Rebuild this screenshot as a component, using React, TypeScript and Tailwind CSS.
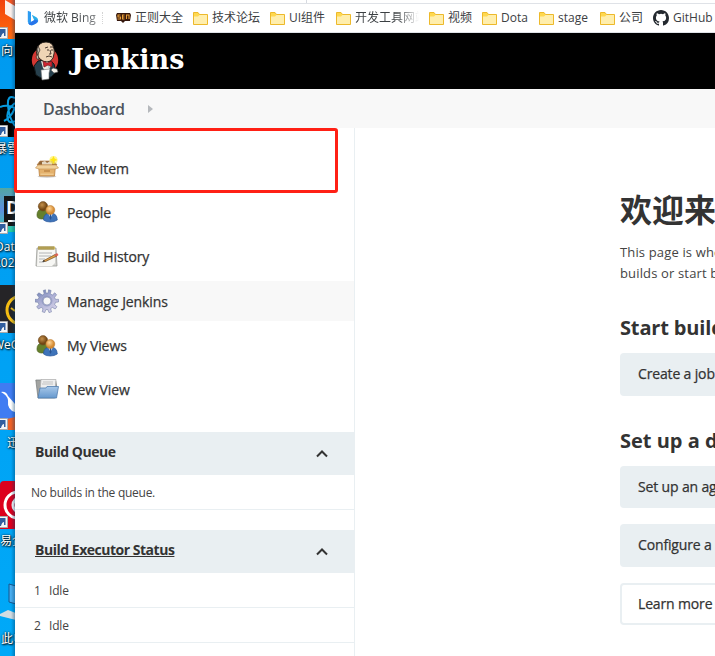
import type { ReactNode } from "react";

const SANS = "font-['Open_Sans','Noto_Sans_CJK_SC',sans-serif]";

function Folder() {
  return (
    <svg width="15" height="13" viewBox="0 0 15 13" className="shrink-0">
      <path d="M.5 12.5V.5H5L6.500 2.500H14.500V12.500Z" fill="#ffd84f" stroke="#edb92b" />
      <path d="M1 4.500H5L6.500 3H14V12H1Z" fill="#ffeeac" />
    </svg>
  );
}

function Bing() {
  return (
    <svg width="12" height="16" viewBox="0 0 12 16" className="shrink-0">
      <path d="M.8.8 4 2v10.2L1.8 13.800.8 12Z" fill="#2c9cf2" />
      <path d="M4.800 4.800 9.400 7.200Q11.300 8.400 11.200 11 10.500 13.500 5.200 15.200 2.600 15.800 1.300 13.600L7.200 10.200Z" fill="#2aaee9" />
      <path d="m1.300 13.500 7-4 2.800 1.300Q10.500 13.400 5.200 15.200 2.600 15.800 1.300 13.500Z" fill="#2874ea" />
    </svg>
  );
}

function Badge() {
  return (
    <svg width="15" height="12" viewBox="0 0 15 12" className="shrink-0">
      <path d="M1 1h13l1 2-1 6H9l-2 2-2-2H1L0 3Z" fill="#35170d" />
      <path d="M4.500 3H2v2h2.500v2H1.500M8.500 3H6.500v4H8.500M6.500 5h2M10.500 7V3H13v4" fill="none" stroke="#e9a13a" strokeWidth="1.100" />
    </svg>
  );
}

function Octocat() {
  return (
    <svg width="16" height="16" viewBox="0 0 16 16" className="shrink-0" fill="#24292f">
      <path d="M8 0C3.58 0 0 3.58 0 8c0 3.54 2.29 6.53 5.47 7.59.4.07.55-.17.55-.38 0-.19-.01-.82-.01-1.49-2.01.37-2.53-.49-2.69-.94-.09-.23-.48-.94-.82-1.13-.28-.15-.68-.52-.01-.53.63-.01 1.08.58 1.23.82.72 1.21 1.87.87 2.33.66.07-.52.28-.87.51-1.07-1.78-.2-3.64-.89-3.64-3.95 0-.87.31-1.59.82-2.15-.08-.2-.36-1.02.08-2.12 0 0 .67-.21 2.2.82a7.6 7.6 0 0 1 4 0c1.53-1.04 2.2-.82 2.2-.82.44 1.1.16 1.92.08 2.12.51.56.82 1.27.82 2.15 0 3.07-1.87 3.75-3.65 3.95.29.25.54.73.54 1.48 0 1.07-.01 1.93-.01 2.2 0 .21.15.46.55.38A8.01 8.01 0 0 0 16 8c0-4.42-3.58-8-8-8Z" />
    </svg>
  );
}

function Butler() {
  return (
    <svg width="28" height="40" viewBox="0 0 28 40" className="shrink-0">
      <circle cx="14" cy="19" r="13.2" fill="#d33833" />
      <path d="M7 20 3 25l2 9 5 3 10-1 5-5-2-8-5-5Z" fill="#27404d" stroke="#101719" />
      <path d="M9 18q-5-5-3-10Q8 1 15 1t8 7q1 3-1 9-2 4-6 4-4 0-7-3Z" fill="#eed4b5" stroke="#1c1713" strokeWidth=".9" />
      <path d="M6 8q1 4 1 6-3 0-1 4l2 1-1-6 2-4-2-4Z" fill="#c1b8a8" stroke="#302721" strokeWidth=".7" />
      <path d="m14 7 3-1m2 0 3 0M16 9l2 0m2 0 2 0m-3 0 1 4-2 0m-3 3q3-2 6 0" fill="none" stroke="#33271f" strokeWidth=".9" />
      <path d="m10 20 4 1 5 0 1 4-4 7-4-5Z" fill="#ece9df" />
      <path d="m12 20 4 2 5-2v6l-4-2-4 2Z" fill="#d22532" stroke="#65161b" strokeWidth=".7" />
      <circle cx="18" cy="26" r="1" fill="#a8c0cb" />
      <path d="m10 29 9-1-1 4v6l-7 1Z" fill="#fff" stroke="#777" strokeWidth=".6" />
      <path d="m20 29 2-2 4 1 1 3-4 1Z" fill="#f5f0e7" stroke="#555" strokeWidth=".6" />
    </svg>
  );
}

function Box() {
  return (
    <svg width="24" height="24" viewBox="0 0 24 24" className="shrink-0">
      <ellipse cx="12" cy="20.500" rx="9.500" ry="1.200" fill="#ccc" />
      <path d="M5 5h14l3 4H2Z" fill="#8f6538" stroke="#b9824a" strokeWidth=".7" />
      <path d="m7 6 3-1 2 2 3-2 2 2v2H7Z" fill="#e5d8c2" />
      <path d="M3.500 9h17l-1 11H4.500Z" fill="#e4b16c" stroke="#bb8240" strokeWidth=".8" />
      <path d="M3 9h18l2.500 3-3.500 1H4L.5 12Z" fill="#f0d09b" stroke="#c38f50" strokeWidth=".6" />
      <path d="M9 14h6v2H9Z" fill="#c9924f" />
      <path d="M5.500 17.500h13v1.500h-13Z" fill="#efc98e" />
      <circle cx="18.500" cy="4" r="4" fill="#fff06b" opacity=".75" />
      <path d="m18.500 0 1.100 2.600L22.500 4l-2.800 1.100-1.200 2.600-1.100-2.600L14.500 4l2.800-1.400Z" fill="#ffe511" />
    </svg>
  );
}

function People() {
  return (
    <svg width="24" height="24" viewBox="0 0 24 24" className="shrink-0">
      <defs>
        <radialGradient id="hd1" cx=".4" cy=".35"><stop stopColor="#c5914c" /><stop offset="1" stopColor="#744714" /></radialGradient>
        <radialGradient id="hd2" cx=".4" cy=".35"><stop stopColor="#ffd79a" /><stop offset="1" stopColor="#d58b32" /></radialGradient>
      </defs>
      <path d="M2 15q0-6 6-6 6 0 6 6-2 4-7 4-5 0-5-4Z" fill="#65802c" stroke="#495e1a" strokeWidth=".7" />
      <circle cx="8" cy="6.300" r="4.700" fill="url(#hd1)" stroke="#68451c" strokeWidth=".5" />
      <path d="M8.500 20q0-7 7-7 6.500 0 6.800 7-3 2-7 2-4.500 0-6.800-2Z" fill="#3e73b9" stroke="#27569b" strokeWidth=".7" />
      <path d="m13 13 2.500 5 2.500-5Z" fill="#eef4fc" />
      <path d="m15 14 1 0 .5 4-1 2-1-2Z" fill="#285391" />
      <circle cx="15.300" cy="10" r="4.500" fill="url(#hd2)" stroke="#b87526" strokeWidth=".5" />
    </svg>
  );
}

function Notepad() {
  return (
    <svg width="24" height="24" viewBox="0 0 24 24" className="shrink-0">
      <path d="M2 3h19l1 18H1Z" fill="#d2d2cf" stroke="#9b9c97" strokeWidth=".8" />
      <path d="M3 4h17v14l-3 3H2Z" fill="#f7f7f4" />
      <path d="M3 1.500h17v3H3Z" fill="#d2bd67" />
      <path d="M4 1v4m2-4v4m2-4v4m2-4v4m2-4v4m2-4v4m2-4v4m2-4v4" stroke="#807235" strokeWidth=".8" />
      <path d="M4 8h13M4 11h12M4 14h6M4 17h5" stroke="#b2b4b6" strokeWidth="1" />
      <path d="m8 16 12-6.500 2 1.500-11.500 5.500Z" fill="#e5a345" stroke="#6e4b21" strokeWidth=".7" />
      <path d="m19 10 3-2 1.500 2-2 1.500Z" fill="#d96255" /><path d="m7 17 2-2 1 1.500Z" fill="#333" />
    </svg>
  );
}

function Gear() {
  return (
    <svg width="24" height="24" viewBox="0 0 24 24" className="shrink-0">
      <defs><linearGradient id="cog" x2=".6" y2="1"><stop stopColor="#6479ad" /><stop offset=".45" stopColor="#a6aad1" /><stop offset="1" stopColor="#d3d0e8" /></linearGradient></defs>
      <path fillRule="evenodd" d="m10.500.8.3 3.200h2.400l.3-3.200 2.600.7-.8 3.200 2 1.300 2.500-2.200 1.800 2-2 2.500.9 2.100 3-.1v2.700l-3 .3-.8 2.200 2.200 2.300-1.700 2.200-2.800-1.600-1.800 1.300.9 3.100-2.500.8-1.100-3h-2l-1.200 3-2.500-.9.8-3-1.800-1.300-2.700 1.600-1.800-2.200 2.200-2.300-.8-2.200-3-.3v-2.700l3 .1.900-2.100-2-2.500 1.800-2L7.300 6l1.900-1.300-.9-3.200ZM12 8a4 4 0 1 0 0 8 4 4 0 0 0 0-8Z" fill="url(#cog)" stroke="#737fa7" strokeWidth=".6" />
      <circle cx="12" cy="12" r="4.900" fill="none" stroke="#8791ba" strokeWidth=".7" />
    </svg>
  );
}

function BlueFolder() {
  return (
    <svg width="24" height="24" viewBox="0 0 24 24" className="shrink-0">
      <defs><linearGradient id="tab" x2="0" y2="1"><stop stopColor="#a8c8e9" /><stop offset="1" stopColor="#6598ce" /></linearGradient></defs>
      <path d="M.8 2h6l1 1h13l1 6-2 11H3Z" fill="#a2a3a1" stroke="#777b7b" strokeWidth=".7" />
      <path d="M6 1.500h15l-1 11H5Z" fill="#eee" stroke="#aaa" strokeWidth=".7" />
      <path d="m8 4 10 0m-11 2h11" stroke="#c2c2c2" />
      <path d="M5 10h6l1-1.500h11.500L21.500 20H3Z" fill="url(#tab)" stroke="#527eaf" strokeWidth=".8" />
    </svg>
  );
}

const bookmarks: { icon: ReactNode; label: string; width: string; fade?: boolean }[] = [
  { icon: <Folder />, label: "技术论坛", width: "w-12" },
  { icon: <Folder />, label: "UI组件", width: "w-[37px]" },
  { icon: <Folder />, label: "开发工具网站", width: "w-16", fade: true },
  { icon: <Folder />, label: "视频", width: "w-6" },
  { icon: <Folder />, label: "Dota", width: "w-7" },
  { icon: <Folder />, label: "stage", width: "w-8" },
  { icon: <Folder />, label: "公司", width: "w-6" },
  { icon: <Octocat />, label: "GitHub", width: "w-[42px]" },
];

function Bookmarks() {
  return (
    <div className="flex h-[30px] shrink-0 items-center overflow-hidden border-t border-b border-[#dfe2e7] pl-3 text-xs text-[#3c4043]">
      <Bing />
      <span className="ml-[5px] w-[58px] overflow-hidden whitespace-nowrap bg-gradient-to-r from-[#3c4043] from-60% to-[#3c404380] bg-clip-text text-transparent">微软 Bing</span>
      <span className="mr-[13px] h-3 border-l border-dotted border-[#d4d4d4]" />
      <Badge />
      <span className="ml-1 w-12 shrink-0 whitespace-nowrap">正则大全</span>
      {bookmarks.map((b) => (
        <div key={b.label} className="ml-2.5 flex shrink-0 items-center gap-1">
          {b.icon}
          <span className={`${b.width} whitespace-nowrap ${b.fade ? "overflow-hidden bg-gradient-to-r from-[#3c4043] from-65% to-transparent bg-clip-text text-transparent" : ""}`}>{b.label}</span>
        </div>
      ))}
    </div>
  );
}

const tasks = [
  { icon: <Box />, label: "New Item" },
  { icon: <People />, label: "People" },
  { icon: <Notepad />, label: "Build History" },
  { icon: <Gear />, label: "Manage Jenkins", active: true },
  { icon: <People />, label: "My Views" },
  { icon: <BlueFolder />, label: "New View" },
];

function PaneHeader({ title, link }: { title: string; link?: boolean }) {
  return (
    <div className="flex h-[43px] items-center justify-between bg-[#e9eff2] pr-[26px] pl-5">
      <span className={`pb-0.5 text-sm font-bold tracking-[-0.48px] text-[#333] ${link ? "underline" : ""}`}>{title}</span>
      <svg width="13" height="9" viewBox="0 0 13 9"><path d="m2 7.500 5-5 5 5" fill="none" stroke="#333" strokeWidth="2" /></svg>
    </div>
  );
}

function SidePanel() {
  return (
    <aside className="relative w-[340px] shrink-0 border-r border-[#e9eff2] pt-5">
      <nav className="flex flex-col gap-[4.400px]">
        {tasks.map((t) => (
          <div key={t.label} className={`flex h-10 items-center gap-2 pl-5 text-sm text-[#333] ${t.active ? "bg-[#f8f8f8]" : ""}`}>
            {t.icon}
            <span className="pt-px tracking-[-0.1px] [-webkit-text-stroke:0.25px_#333]">{t.label}</span>
          </div>
        ))}
      </nav>
      <div className="mt-[22px]">
        <PaneHeader title="Build Queue" />
        <div className="flex h-[35px] items-center border-b border-[#e9eff2] pt-0.5 pl-4 text-xs tracking-[-0.26px] text-[#444]">No builds in the queue.</div>
      </div>
      <div className="mt-5">
        <PaneHeader title="Build Executor Status" link />
        {["1", "2"].map((n) => (
          <div key={n} className="flex h-[35px] items-center gap-2 border-b border-[#e9eff2] pt-0.5 pl-[19px] text-xs text-[#444]">
            <span>{n}</span><span className="tracking-[-0.1px]">Idle</span>
          </div>
        ))}
      </div>
      <div className="absolute top-0 -left-px h-[65px] w-[324px] rounded-[3px] border-3 border-[#ff2015]" />
    </aside>
  );
}

function Tile({ label, outline, className }: { label: string; outline?: boolean; className: string }) {
  return (
    <div className={`flex w-[560px] items-center whitespace-nowrap rounded pb-px text-sm tracking-[-0.15px] text-[#333] [-webkit-text-stroke:0.25px_#333] ${outline ? "border-2 border-[#e9eff2] pl-4" : "bg-[#e9eff2] pl-[18px]"} ${className}`}>{label}</div>
  );
}

function Main() {
  return (
    <main className="min-w-0 flex-1 overflow-hidden pt-[59px] pl-[265px] text-[#333]">
      <h1 className="h-[46px] whitespace-nowrap text-[32px] leading-[46px] font-bold">欢迎来到 Jenkins！</h1>
      <p className="mt-[9px] h-[42px] whitespace-nowrap text-[13px] leading-[21px] tracking-[0.15px] text-[#444]">This page is where your Jenkins jobs<br />builds or start building a software project.</p>
      <h2 className="mt-[30px] h-7 whitespace-nowrap text-xl leading-7 font-bold tracking-[-0.15px]">Start building your software project</h2>
      <Tile label="Create a job" className="mt-[11px] h-[43px]" />
      <h2 className="mt-[31px] h-7 whitespace-nowrap text-xl leading-7 font-bold">Set up a distributed build</h2>
      <Tile label="Set up an agent" className="mt-[11px] h-[42px]" />
      <Tile label="Configure a cloud" className="mt-4 h-[43px]" />
      <Tile label="Learn more about distributed builds" outline className="mt-4 h-[42px]" />
    </main>
  );
}

function Shortcut({ className }: { className: string }) {
  return (
    <svg width="8" height="12" viewBox="0 0 8 12" className={`absolute left-0 ${className}`}>
      <path d="M-1 .5H7.500V11.500H-1Z" fill="#f4f5f7" stroke="#aaa" />
      <path d="M0 2h5.500v7H4V6Q2 6 1 10H0Z" fill="#315e9f" />
    </svg>
  );
}

function DeskLabel({ className, children }: { className: string; children: ReactNode }) {
  return <span className={`absolute whitespace-nowrap text-xs leading-4 text-white [text-shadow:1px_1px_2px_#000,0_0_2px_#000] ${className}`}>{children}</span>;
}

function Desktop() {
  return (
    <div className="relative w-[15px] shrink-0 overflow-hidden bg-gradient-to-b from-[#0099ef] to-[#00a9f8]">
      <div className="absolute top-0 left-0 h-[39px] w-4 bg-gradient-to-b from-[#f13f0b] to-[#ff6b10]" />
      <svg width="10" height="20" viewBox="0 0 10 20" className="absolute top-0 left-[5px]"><path d="M0 0h10v20L0 14Z" fill="#fbefea" /><path d="m0 0 10 6v-6Z" fill="#f25422" /></svg>
      <Shortcut className="top-[27px]" />
      <DeskLabel className="top-[43px] left-px">向日葵</DeskLabel>
      <div className="absolute top-[89px] left-0 h-12 w-4 bg-black" />
      <svg width="15" height="40" viewBox="0 0 15 40" className="absolute top-[94px] left-0"><path d="M15 4Q7 0 8 12t7 20M0 13q7-3 15 1M15 9Q5 17 8 26q2 4 7 1M4 27q8-4 11-14" fill="none" stroke="#079bdf" strokeWidth="2" /></svg>
      <Shortcut className="top-[125px]" />
      <DeskLabel className="top-[141px] left-[-5px]">暴雪战网</DeskLabel>
      <div className="absolute top-[188px] left-0 h-[44px] w-4 bg-gradient-to-b from-[#52a7a3] via-[#5e8fde] to-[#18cf9d]" />
      <div className="absolute top-[196px] left-1 h-[30px] w-4 bg-[#151515]" />
      <span className="absolute top-[195px] left-1.5 text-lg leading-6 font-bold text-white">D</span>
      <div className="absolute top-[220px] left-2 h-0.5 w-3 bg-white" />
      <Shortcut className="top-[222px]" />
      <DeskLabel className="top-[239px] left-[-5px]">DataGrip</DeskLabel>
      <DeskLabel className="top-[255px] left-[-6px]">2020.1</DeskLabel>
      <div className="absolute top-[285px] left-0 h-12 w-4 bg-[#252427]" />
      <svg width="15" height="40" viewBox="0 0 15 40" className="absolute top-[290px] left-0"><circle cx="21" cy="20" r="14" fill="none" stroke="#f5bd13" strokeWidth="3" /><path d="m11 18 4 3" stroke="#f5bd13" strokeWidth="2" /></svg>
      <Shortcut className="top-[321px]" />
      <DeskLabel className="top-[337px] left-[-7px]">WeGame</DeskLabel>
      <div className="absolute top-[383px] left-0 h-[47px] w-4 bg-[#407cf2]" />
      <svg width="15" height="47" viewBox="0 0 15 47" className="absolute top-[383px] left-0"><path d="M1 9q5-1 7 4l7 8v8q-8-2-7-12Q7 12 1 9Z" fill="#fff" /><path d="M7 36l8-2v13H7Z" fill="#ee6026" /></svg>
      <Shortcut className="top-[418px]" />
      <DeskLabel className="top-[435px] left-[7px]">迅雷</DeskLabel>
      <div className="absolute top-[481px] left-0 h-12 w-4 rounded-tl bg-[#dc001d]" />
      <svg width="15" height="40" viewBox="0 0 15 40" className="absolute top-[486px] left-0"><circle cx="18" cy="19" r="13" fill="none" stroke="#fff" strokeWidth="3" /><circle cx="20" cy="19" r="7" fill="none" stroke="#fff" strokeWidth="3" /></svg>
      <Shortcut className="top-[516px]" />
      <DeskLabel className="top-[533px] left-0">易企秀</DeskLabel>
      <svg width="15" height="42" viewBox="0 0 15 42" className="absolute top-[582px] left-0"><path d="m9 2 7 2v18l-7-2Z" fill="#48adf0" stroke="#17568c" /><path d="m0 32 8-4 8 3v7L0 34Z" fill="#d2dce2" /></svg>
      <DeskLabel className="top-[631px] left-px">此电脑</DeskLabel>
      <div className="absolute top-0 right-0 h-full w-1 bg-gradient-to-r from-transparent to-[#003a6266]" />
    </div>
  );
}

export default function App() {
  return (
    <div className={`flex h-[656px] w-[715px] overflow-hidden bg-white ${SANS}`}>
      <Desktop />
      <div className="flex min-w-0 flex-1 flex-col">
        <div className="flex h-[3px] shrink-0 pl-[291px]"><div className="w-px bg-[#d7dae0]" /></div>
        <Bookmarks />
        <header className="flex h-14 shrink-0 items-center bg-black pl-4">
          <Butler />
          <span className="ml-3 pb-0.5 font-['DejaVu_Serif',serif] text-[27px] font-bold text-white">Jenkins</span>
        </header>
        <div className="flex h-[39px] shrink-0 items-center bg-[#f8f8f8] pl-7">
          <span className="pt-px text-base font-semibold tracking-[-0.35px] text-[#4d545d]">Dashboard</span>
          <svg width="5" height="8" viewBox="0 0 5 8" className="ml-[23px]"><path d="M0 0 5 4 0 8Z" fill="#b5b8bc" /></svg>
        </div>
        <div className="flex min-h-0 flex-1">
          <SidePanel />
          <Main />
        </div>
      </div>
    </div>
  );
}
